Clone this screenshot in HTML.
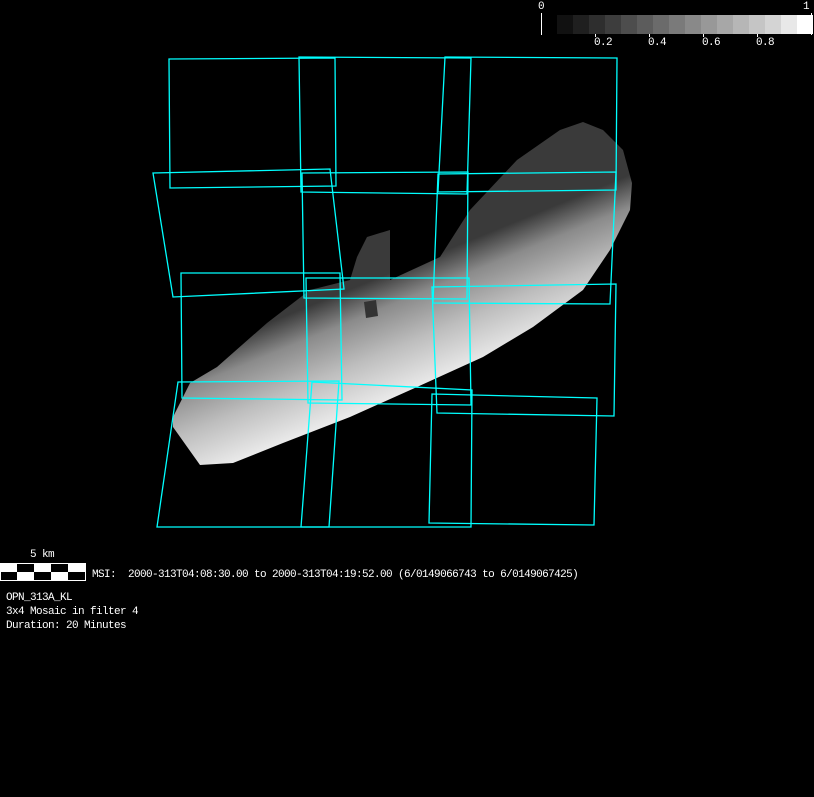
<!DOCTYPE html>
<html><head><meta charset="utf-8"><style>
html,body{margin:0;padding:0;background:#000;}
body{width:814px;height:797px;position:relative;overflow:hidden;}
.t{position:absolute;color:#fff;font-family:"Liberation Mono","DejaVu Sans Mono",monospace;font-size:11px;letter-spacing:-0.6px;white-space:pre;line-height:12px;}
</style></head><body>
<svg width="814" height="797" style="position:absolute;left:0;top:0">
<defs>
<linearGradient id="g" gradientUnits="userSpaceOnUse" x1="385" y1="275" x2="430" y2="385">
<stop offset="0" stop-color="#3a3a3a"/><stop offset="0.25" stop-color="#8a8a8a"/><stop offset="0.6" stop-color="#bdbdbd"/><stop offset="1" stop-color="#ececec"/>
</linearGradient>
</defs>
<polygon fill="url(#g)" points="173,427 200,465 233,463 283,443 350,417 417,387 483,357 533,327 583,290 610,250 630,210 632,183 623,150 603,130 583,122 560,130 517,160 470,210 440,257 390,280 390,230 367,237 357,257 350,280 310,290 267,323 217,367 190,383 173,417"/>
<polygon fill="#333" points="364,302 376,300 378,316 366,318"/>
<g fill="none" stroke="#00ffff" stroke-width="1.3">
<polygon points="169,59 335,58 336,186 170,188"/>
<polygon points="299,57 471,58 467,194 301,192"/>
<polygon points="445,57 617,58 616,190 438,192"/>
<polygon points="153,173 330,169 344,289 173,297"/>
<polygon points="302,173 468,172 467,299 304,298"/>
<polygon points="438,174 616,172 610,304 433,303"/>
<polygon points="181,273 340,273 342,400 182,398"/>
<polygon points="306,278 469,278 471,405 308,403"/>
<polygon points="432,287 616,284 614,416 437,413"/>
<polygon points="178,382 339,381 329,527 157,527"/>
<polygon points="312,382 472,390 471,527 301,527"/>
<polygon points="432,394 597,398 594,525 429,523"/>
</g>
<g>
<rect x="557" y="15" width="16" height="19" fill="#111"/><rect x="573" y="15" width="16" height="19" fill="#1f1f1f"/>
<rect x="589" y="15" width="16" height="19" fill="#2e2e2e"/><rect x="605" y="15" width="16" height="19" fill="#3d3d3d"/>
<rect x="621" y="15" width="16" height="19" fill="#4d4d4d"/><rect x="637" y="15" width="16" height="19" fill="#5c5c5c"/>
<rect x="653" y="15" width="16" height="19" fill="#6b6b6b"/><rect x="669" y="15" width="16" height="19" fill="#7a7a7a"/>
<rect x="685" y="15" width="16" height="19" fill="#898989"/><rect x="701" y="15" width="16" height="19" fill="#989898"/>
<rect x="717" y="15" width="16" height="19" fill="#a7a7a7"/><rect x="733" y="15" width="16" height="19" fill="#b6b6b6"/>
<rect x="749" y="15" width="16" height="19" fill="#c5c5c5"/><rect x="765" y="15" width="16" height="19" fill="#d4d4d4"/>
<rect x="781" y="15" width="16" height="19" fill="#e8e8e8"/><rect x="797" y="15" width="16" height="19" fill="#fff"/>
<g stroke="#fff" stroke-width="1"><line x1="541.5" y1="13" x2="541.5" y2="35"/><line x1="811.5" y1="13" x2="811.5" y2="35"/>
<line x1="595.5" y1="34" x2="595.5" y2="37"/><line x1="649.5" y1="34" x2="649.5" y2="37"/><line x1="703.5" y1="34" x2="703.5" y2="37"/><line x1="757.5" y1="34" x2="757.5" y2="37"/></g>
</g>
<rect x="0.5" y="563.5" width="85" height="17" fill="#000" stroke="#fff"/>
<g fill="#fff">
<rect x="0" y="564" width="17" height="8"/><rect x="34" y="564" width="17" height="8"/><rect x="68" y="564" width="17" height="8"/>
<rect x="17" y="572" width="17" height="8"/><rect x="51" y="572" width="17" height="8"/>
</g>
</svg>
<div class="t" style="left:538px;top:1px">0</div>
<div class="t" style="left:803px;top:1px">1</div>
<div class="t" style="left:594px;top:37px">0.2</div>
<div class="t" style="left:648px;top:37px">0.4</div>
<div class="t" style="left:702px;top:37px">0.6</div>
<div class="t" style="left:756px;top:37px">0.8</div>
<div class="t" style="left:30px;top:549px">5 km</div>
<div class="t" style="left:92px;top:569px">MSI:  2000-313T04:08:30.00 to 2000-313T04:19:52.00 (6/0149066743 to 6/0149067425)</div>
<div class="t" style="left:6px;top:592px">OPN_313A_KL</div>
<div class="t" style="left:6px;top:606px">3x4 Mosaic in filter 4</div>
<div class="t" style="left:6px;top:620px">Duration: 20 Minutes</div>
</body></html>
